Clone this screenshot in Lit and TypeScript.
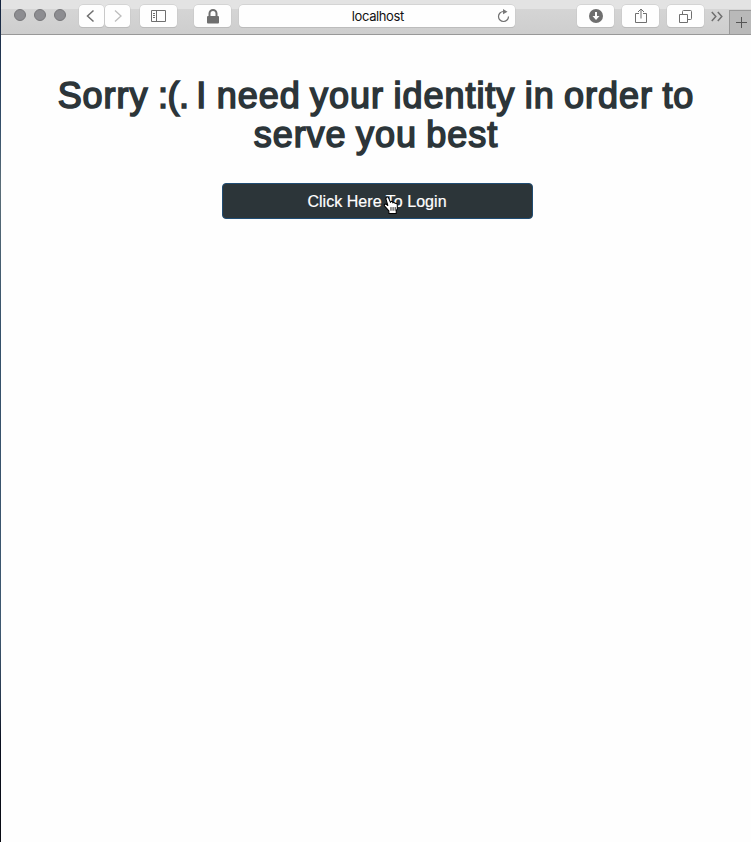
import { LitElement, html, css } from "lit";
import { customElement } from "lit/decorators.js";

@customElement("browser-toolbar")
class BrowserToolbar extends LitElement {
  static styles = css`
    :host {
      display: flex;
      box-sizing: border-box;
      height: 35px;
      padding: 5px 0 0 13px;
      background: linear-gradient(#e3e3e3 0 9px, #d5d5d5 9px, #cecece 33px);
      border-bottom: 1px solid #989898;
      font-family: "Liberation Sans", Arial, sans-serif;
    }
    svg { display: block; fill: none; stroke: #6f6f6f; }
    .lights { display: flex; gap: 8px; padding-top: 4px; width: 65px; }
    .light { width: 12px; height: 12px; box-sizing: border-box; border-radius: 50%; background: #8d8d91; border: 1px solid #77777a; }
    .btn {
      display: flex;
      align-items: center;
      justify-content: center;
      box-sizing: border-box;
      height: 22px;
      width: 37px;
      border-radius: 4px;
      background: #fefefe;
      box-shadow: 0 0 0 0.5px #c6c6c6, 0 1px 0 #b2b2b2;
    }
    .nav { display: flex; gap: 1px; margin: 0 10px 0 0; }
    .nav .btn { width: 25px; }
    .lock { margin: 0 8px 0 17px; padding-left: 1px; }
    .address { width: 277px; position: relative; margin-right: 62px; font: 13px Inter, "Liberation Sans", sans-serif; color: #111; }
    .host { letter-spacing: -0.4px; padding-left: 2px; }
    .reload { position: absolute; right: 5px; top: 4px; }
    .group { display: flex; gap: 8px; }
    .more { margin: 6px 6px 0 7px; }
    .plus {
      display: flex;
      box-sizing: border-box;
      margin-top: 5px;
      width: 22px;
      height: 24px;
      padding: 5px 0 0 5px;
      background: #b9b9b9;
      border: solid #999;
      border-width: 1px 0 0 1px;
      overflow: hidden;
      flex: none;
    }
  `;
  render() {
    return html`
      <div class="lights"><span class="light"></span><span class="light"></span><span class="light"></span></div>
      <div class="nav">
        <div class="btn"><svg width="12" height="14" stroke-width="1.5"><path d="M8.500 1.500 2.500 7l6 5.500"/></svg></div>
        <div class="btn"><svg width="12" height="14" stroke-width="1.3"><path stroke="#bdbdbd" d="M4 1.500 10 7l-6 5.500"/></svg></div>
      </div>
      <div class="btn"><svg width="15" height="12"><path d="M.5.5h14v11H.500zM5.500.500v11M2 3.500h2M2 5.500h2M2 7.500h2"/></svg></div>
      <div class="btn lock"><svg width="14" height="15"><path stroke-width="2" d="M3.500 8V4.500a3.500 3.500 0 0 1 7 0V8"/><rect x="1" y="7" width="12" height="7.500" rx="1" fill="#6f6f6f" stroke="none"/></svg></div>
      <div class="btn address">
        <span class="host">localhost</span>
        <svg class="reload" width="13" height="14" stroke="#808080"><path stroke-width="1.200" d="M6.500 2.500A5 5 0 1 0 11.500 7.500"/><path fill="#777" stroke="none" d="M6 0l4.500 2.700L6 5.200z"/></svg>
      </div>
      <div class="group">
        <div class="btn"><svg width="14" height="14"><circle cx="7" cy="7" r="7" fill="#6f6f6f" stroke="none"/><path fill="#fff" stroke="none" d="M6 3h2v4h2.500L7 11 3.500 7H6z"/></svg></div>
        <div class="btn"><svg width="12" height="16"><path d="M4 5.500H.500v9h11v-9H8M6 10.500V1.500M3 4l3-3 3 3"/></svg></div>
        <div class="btn"><svg width="13" height="13"><path d="M.500 4.500h8v8h-8zM3.500 4V1.500q0-1 1-1h7q1 0 1 1v7q0 1-1 1H9"/></svg></div>
      </div>
      <svg class="more" width="12" height="11" stroke-width="1.500"><path d="M.800 1l4 4.500-4 4.500M6.800 1l4 4.500-4 4.500"/></svg>
      <div class="plus"><svg width="13" height="13"><path stroke="#555" d="M6.500 1v11M1 6.500h11"/></svg></div>
    `;
  }
}

@customElement("app-root")
class AppRoot extends LitElement {
  static styles = css`
    :host {
      display: block;
      box-sizing: border-box;
      height: 842px;
      overflow: hidden;
      padding-left: 1px;
      background: linear-gradient(#14233d, #35506b 15%, #5b6e78 22%, #34506a 40%, #3e5870 75%, #27384e 83%, #0a1020 88%, #080a12);
    }
    .window { height: 842px; background: #fefefe; }
    .page { display: flex; flex-direction: column; align-items: center; padding-top: 41px; font-family: "Liberation Sans", Arial, sans-serif; }
    h1 {
      margin: 0 0 29px;
      font-size: 36px;
      line-height: 39px;
      font-weight: 400;
      text-align: center;
      white-space: nowrap;
      color: #2c3539;
      -webkit-text-stroke: 1.6px #2c3539;
      letter-spacing: 0.98px;
      word-spacing: -1.6px;
    }
    .face { letter-spacing: -0.5px; }
    .login {
      position: relative;
      box-sizing: border-box;
      width: 311px;
      height: 36px;
      padding: 1px 0 0;
      margin-left: 2px;
      border: 1px solid #204d74;
      border-radius: 4px;
      background: #2c3539;
      color: #fff;
      font: 16px/34px "Liberation Sans", Arial, sans-serif;
      text-align: center;
    }
    .label { -webkit-text-stroke: 0.2px #fff; letter-spacing: 0.04px; }
    .hand { position: absolute; left: 160px; top: 12px; }
  `;
  render() {
    return html`
      <div class="window">
        <browser-toolbar></browser-toolbar>
        <main class="page">
          <h1>Sorry <span class="face">:(. </span>I need your identity in order to<br />serve you best</h1>
          <button class="login">
            <span class="label">Click Here To Login</span>
            <svg class="hand" width="17" height="19" viewBox="0 0 16 18">
              <path fill="#fff" stroke="#000" stroke-linejoin="round" d="M5.500 16.500V14L1.500 9.500Q.500 7.500 2.500 7.500L4.500 9 2.800 3Q2.500 1 4 1T5.500 2.500L7 6Q7.500 4.500 9 5.500L9.300 6.500Q10.500 5.500 11.500 7Q13.500 6.500 13.500 9V12L12.500 14v2.500z"/>
              <path fill="none" stroke="#000" stroke-width=".8" d="M7.500 10.500v3.500M9.500 10.500v3.500M11.500 10.500v3.500"/>
            </svg>
          </button>
        </main>
      </div>
    `;
  }
}
